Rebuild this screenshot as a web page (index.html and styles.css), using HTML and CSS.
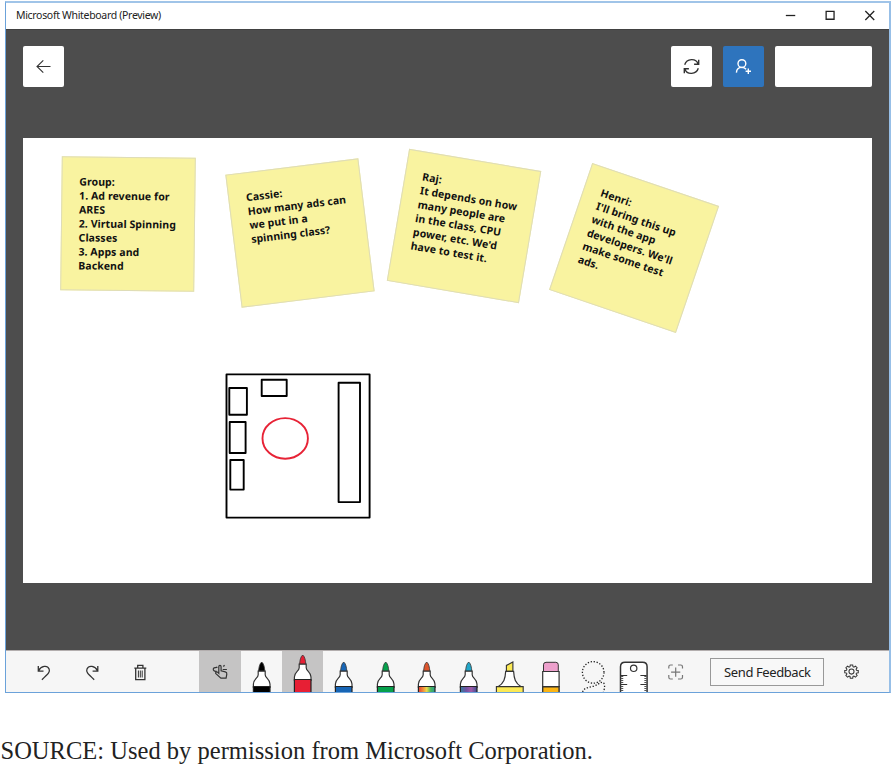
FILE: index.html
```html
<!DOCTYPE html>
<html lang="en">
<head>
<meta charset="utf-8">
<title>Microsoft Whiteboard (Preview)</title>
<link rel="stylesheet" href="styles.css">
</head>
<body>
<main class="window">
  <header class="titlebar">
    <span class="title">Microsoft Whiteboard (Preview)</span>
    <div class="controls">
      <svg viewBox="0 0 40 26"><path d="M16 12.5h9.5"/></svg>
      <svg viewBox="0 0 40 26"><path d="M16.3 8.3h8v8h-8z"/></svg>
      <svg viewBox="0 0 40 26"><path d="M16.500 8l9 9M25.500 8l-9 9"/></svg>
    </div>
  </header>

  <section class="stage">
    <nav class="topbar">
      <button class="tile" aria-label="Back"><svg viewBox="0 0 41 41"><path d="M27.500 20.500H14M20.300 14.300l-6.300 6.200 6.300 6.200"/></svg></button>
      <div class="actions">
        <button class="tile" aria-label="Sync"><svg class="bold" viewBox="0 0 41 41"><path d="M13.700 18.700C15.700 12.300 25 11.800 27.200 18M27.700 13.800v4.500h-4.600M27.300 22.300c-2 6.400-11.300 6.900-13.500.7M13.300 27.200v-4.500h4.600"/></svg></button>
        <button class="tile invite" aria-label="Invite"><svg class="bold" viewBox="0 0 41 41"><circle cx="18.900" cy="17.600" r="3.900"/><path d="M13.400 26.600c.2-3.200 2.200-5.200 5.500-5.200 2 0 3.300.7 4.200 1.800M25.300 22.600v5.400M22.600 25.300H28"/></svg></button>
        <div class="tile account"></div>
      </div>
    </nav>

    <div class="board">
      <article class="note group">Group:<br>1. Ad revenue for<br>ARES<br>2. Virtual Spinning<br>Classes<br>3. Apps and<br>Backend</article>
      <article class="note cassie">Cassie:<br>How many ads can<br>we put in a<br>spinning class?</article>
      <article class="note raj">Raj:<br>It depends on how<br>many people are<br>in the class, CPU<br>power, etc. We'd<br>have to test it.</article>
      <article class="note henri">Henri:<br>I'll bring this up<br>with the app<br>developers. We'll<br>make some test<br>ads.</article>
      <svg class="sketch" viewBox="225 373 146 146">
        <rect x="226.500" y="374.400" width="143.100" height="143.200"/>
        <rect x="229.300" y="388" width="17.600" height="26.700"/>
        <rect x="229.700" y="422" width="15.900" height="31"/>
        <rect x="230.300" y="460" width="13.400" height="29.600"/>
        <rect x="261.700" y="379.700" width="25" height="16.300"/>
        <rect x="338.600" y="382.700" width="21.400" height="119.400"/>
        <ellipse class="red" cx="285.200" cy="438.400" rx="22.700" ry="20.300"/>
      </svg>
    </div>
  </section>

  <footer class="toolbar">
    <svg width="0" height="0" class="defs">
      <defs>
        <linearGradient id="rainbow"><stop offset="0" stop-color="#e33b35"/><stop offset=".3" stop-color="#f3913a"/><stop offset=".5" stop-color="#e9dc4c"/><stop offset=".75" stop-color="#45b45b"/><stop offset="1" stop-color="#2b9a8d"/></linearGradient>
        <linearGradient id="galaxy"><stop offset="0" stop-color="#347e9c"/><stop offset=".35" stop-color="#7151a2"/><stop offset=".65" stop-color="#a35ba8"/><stop offset="1" stop-color="#3a4d91"/></linearGradient>
        <symbol id="pen" viewBox="0 0 41.400 48">
          <path class="ink" d="M17.600 20.300c.2-4 1-7.700 3.100-9.300 2.100 1.600 2.900 5.300 3.100 9.300z"/>
          <path class="shell" d="M17.200 20.200h7v3.600c0 3.300 4.800 4.300 4.800 9.200v3.300H12.400V33c0-4.900 4.800-5.900 4.800-9.200z"/>
          <path class="band" d="M12.400 35.500H29V50H12.400z"/>
        </symbol>
      </defs>
    </svg>
    <div class="history">
      <svg viewBox="0 0 48.500 40"><path d="M19.300 14v5.200h5.200M19.600 18.700c2.500-5 8.700-5.800 10.500-1.800 1.200 2.700-.2 4.600-7.200 10.800"/></svg>
      <svg viewBox="0 0 48.500 40"><path d="M29.800 14v5.200h-5.200M29.500 18.700c-2.500-5-8.700-5.800-10.500-1.800-1.200 2.700.2 4.600 7.200 10.800"/></svg>
      <svg class="trash" viewBox="0 0 48.500 40"><path d="M18.300 16.200h12M21.700 15.700v-2.300h5.200v2.300M19.700 16.200v11.500h9.200V16.200"/><path class="thin" d="M22.400 18.500v7M24.300 18.500v7M26.200 18.500v7"/></svg>
    </div>
    <div class="tools">
      <div class="tool selected"><svg viewBox="0 0 41.400 40"><path class="line" d="M19.800 22.300v-6.600c0-1.700 2.300-1.700 2.300 0v4.200l4.200 1c1.200.3 1.700 1 1.500 2.300l-.7 4h-5.200l-5-4.500c-.9-1.300.7-2.300 1.900-1.300zM17.500 20.200c-1.800.5-3.800-.6-3.100-2.700.9-1.700 2.700-.2 4-1.500M23.700 18.500h4.200M24.300 15.500l1.300-1.300"/></svg></div>
      <div class="tool black"><svg class="marker"><use href="#pen"/></svg></div>
      <div class="tool selected red-pen raised"><svg class="marker"><use href="#pen"/></svg></div>
      <div class="tool blue"><svg class="marker"><use href="#pen"/></svg></div>
      <div class="tool green"><svg class="marker"><use href="#pen"/></svg></div>
      <div class="tool rainbow"><svg class="marker"><use href="#pen"/></svg></div>
      <div class="tool galaxy"><svg class="marker"><use href="#pen"/></svg></div>
      <div class="tool"><svg viewBox="0 0 41.400 40"><path class="yellow" d="M17.400 20.300v-5.900l6.500-3.400v9.300z"/><path class="shell" d="M16.700 20.300h7.900c.4 7.300 1.700 12 7.600 15.400H9c5.900-3.400 7.300-8.100 7.700-15.400z"/><path class="yellow" d="M7.400 35.600h26.800V44H7.400z"/></svg></div>
      <div class="tool"><svg viewBox="0 0 41.400 40"><path class="pink" d="M13.500 21v-7.200q0-2.500 2.500-2.500h9.800q2.500 0 2.500 2.500V21z"/><path class="shell" d="M12.700 20.500h16.400v15H12.700z"/><path class="gold" d="M12.700 35.800h16.400V44H12.700z"/></svg></div>
      <div class="tool"><svg viewBox="0 0 41.400 40"><g class="dots"><circle cx="21.200" cy="21.400" r="10.800"/><path d="M10.600 41c1.500-5 7.500-4.500 12-6.200 5-1.900 6.800-5 9.300-2.600 1.800 3.600-.5 8.800-.5 8.800"/></g></svg></div>
      <div class="tool"><svg viewBox="0 0 41.400 40"><path class="shell thick" d="M7.500 44V15.800q0-4.500 4.500-4.500h17.600q4.500 0 4.500 4.500V44z"/><circle class="line" cx="20.700" cy="17.300" r="3.200"/><path class="ticks" d="M9 25v16M32.600 25v16"/><path class="line" d="M8 24.500h6.200M8 33.500h6.200M33.600 24.500h-6.200M33.600 33.500h-6.200"/></svg></div>
      <div class="tool"><svg viewBox="0 0 41.400 40"><path class="gray" d="M14.800 17.500v-1.700q0-1.800 1.800-1.800h2.200M24 14h2.700q1.800 0 1.800 1.800v1.700M28.500 24v2.200q0 1.800-1.800 1.800H24M18.800 28h-2.200q-1.800 0-1.800-1.800V24M21.700 16.500v9.200M17.100 21.100h9.200"/></svg></div>
    </div>
    <button class="feedback"><span>Send Feedback</span></button>
    <svg class="gear" viewBox="0 0 16 16"><path d="M6.700 1h2.600l.3 1.900 1 .4 1.600-1.100L14 4l-1.100 1.500.4 1.100 1.900.3v2.500l-1.900.3-.4 1L14 12.300 12.200 14l-1.600-1.100-1 .4-.3 1.900H6.700l-.3-1.900-1-.4L3.800 14 2 12.300l1.100-1.600-.4-1-1.900-.3V6.900l1.900-.3.4-1.100L2 4l1.800-1.800 1.600 1.100 1-.4z"/><circle cx="8" cy="8.100" r="2.700"/></svg>
  </footer>
</main>
<p class="caption"><span>SOURCE: Used by permission from Microsoft Corporation.</span></p>
</body>
</html>
```
FILE: styles.css
```css
* { box-sizing: border-box; }
body {
  margin: 0;
  height: 765px;
  padding: 1px 1px 0 5px;
  overflow: hidden;
  background: #fff;
  color: #222;
  font-family: "Noto Sans", "Open Sans", sans-serif;
}
svg { display: block; fill: none; stroke: #333; }
button { border: 0; padding: 0; font: inherit; }
.window {
  width: 886px;
  height: 692px;
  display: flex;
  flex-direction: column;
  border: 1px solid #6ba2da;
  border-top: 2px solid #a0c4e8;
  border-right: 2px solid #97bfe7;
}
.titlebar {
  height: 26px;
  display: flex;
  align-items: center;
  justify-content: space-between;
  padding-left: 10px;
}
.title { font-size: 10.5px; line-height: 24px; letter-spacing: -.32px; margin-top: -2px; white-space: nowrap; }
.controls { display: flex; }
.controls svg { width: 39.600px; height: 26px; stroke: #222; stroke-width: 1.300; }
.stage {
  height: 621px;
  padding: 16.500px 17px 0 17.400px;
  background: #4d4d4d;
  border-top: 1px solid #414141;
}
.topbar { display: flex; justify-content: space-between; height: 91.500px; }
.actions { display: flex; gap: 11px; }
.tile { width: 41px; height: 41px; background: #fff; border-radius: 2px; }
.tile svg { width: 41px; height: 41px; stroke-width: 1.100; }
.tile svg.bold { stroke-width: 1.400; }
.topbar .tile { margin-top: -.5px; }
.invite { background: #2e74bd; }
.invite svg { stroke: #fff; }
.account { width: 97.400px; }
.board { position: relative; height: 445px; background: #fff; }
.note {
  position: absolute;
  width: 134.400px;
  height: 134.400px;
  padding: 16.700px 0 0 16.800px;
  background: #f9f3a0;
  border: 1px solid #dedcb8;
  color: #111;
  font-size: 10.500px;
  font-weight: 700;
  line-height: 14.100px;
  letter-spacing: .08px;
  white-space: nowrap;
}
.group { left: 37.600px; top: 19.300px; transform: rotate(.7deg); }
.cassie { left: 210.100px; top: 27.600px; transform: rotate(-7deg); }
.raj { left: 374.100px; top: 20.700px; transform: rotate(9.600deg); }
.henri { left: 544.100px; top: 43.300px; transform: rotate(18.800deg); }
.sketch {
  position: absolute;
  left: 201.500px;
  top: 235px;
  width: 146px;
  height: 146px;
  stroke: #000;
  stroke-width: 1.900;
  stroke-linejoin: round;
}
.sketch .red { stroke: #e72336; }
.toolbar {
  height: 42px;
  display: flex;
  align-items: center;
  background: #f6f6f6;
  border-top: 1px solid #b3aeae;
  padding-left: 13px;
  overflow: hidden;
}
.defs { position: absolute; }
.history { display: flex; width: 180.200px; }
.history svg { width: 48.500px; height: 40px; stroke-width: 1.300; }
.history .thin { stroke-width: 1; }
.tools { display: flex; }
.tool { width: 41.400px; height: 41px; overflow: hidden; --ink: #111; --band: var(--ink); }
.tool svg { width: 41.400px; height: 40px; overflow: visible; }
.tool svg.marker { height: 48px; }
.selected { background: #c5c4c4; }
.tool.raised svg { margin-top: -7px; }
.ink { fill: var(--ink); stroke: #333; stroke-width: .8; }
.band { fill: var(--band); stroke: #222; stroke-width: 1.200; }
.shell { fill: #fff; stroke: #333; stroke-width: 1.200; }
.shell.thick { stroke-width: 1.500; }
.black { --ink: #000; }
.red-pen { --ink: #e71f34; }
.blue { --ink: #1765b5; }
.green { --ink: #06a04c; }
.rainbow { --ink: #dd552d; --band: url(#rainbow); }
.galaxy { --ink: #22a7c9; --band: url(#galaxy); }
.yellow { fill: #fbe955; stroke: #333; stroke-width: 1.100; }
.pink { fill: #eda0cc; stroke: #333; }
.gold { fill: #fbb515; stroke: #333; stroke-width: 1.400; }
.dots { stroke: #222; stroke-width: 1.300; stroke-dasharray: 1.300 1.700; }
.line { stroke: #333; stroke-width: 1.200; }
.ticks { stroke: #555; stroke-width: 2.500; stroke-dasharray: 1 1; }
.gray { stroke: #777; stroke-width: 1.200; }
.feedback {
  width: 114px;
  height: 28px;
  margin-left: 14.500px;
  border: 1px solid #999;
  background: #f8f8f8;
  color: #222;
  font-size: 13px;
  line-height: 26px;
  letter-spacing: -.4px;
  white-space: nowrap;
}
.gear { width: 15px; height: 15px; margin-left: 20px; stroke-width: 1.100; }
.caption {
  margin: 42px 0 0 -4.500px;
  color: #222;
  font: 24.500px/32px "Liberation Serif", serif;
  letter-spacing: .02px;
  white-space: nowrap;
}
```
